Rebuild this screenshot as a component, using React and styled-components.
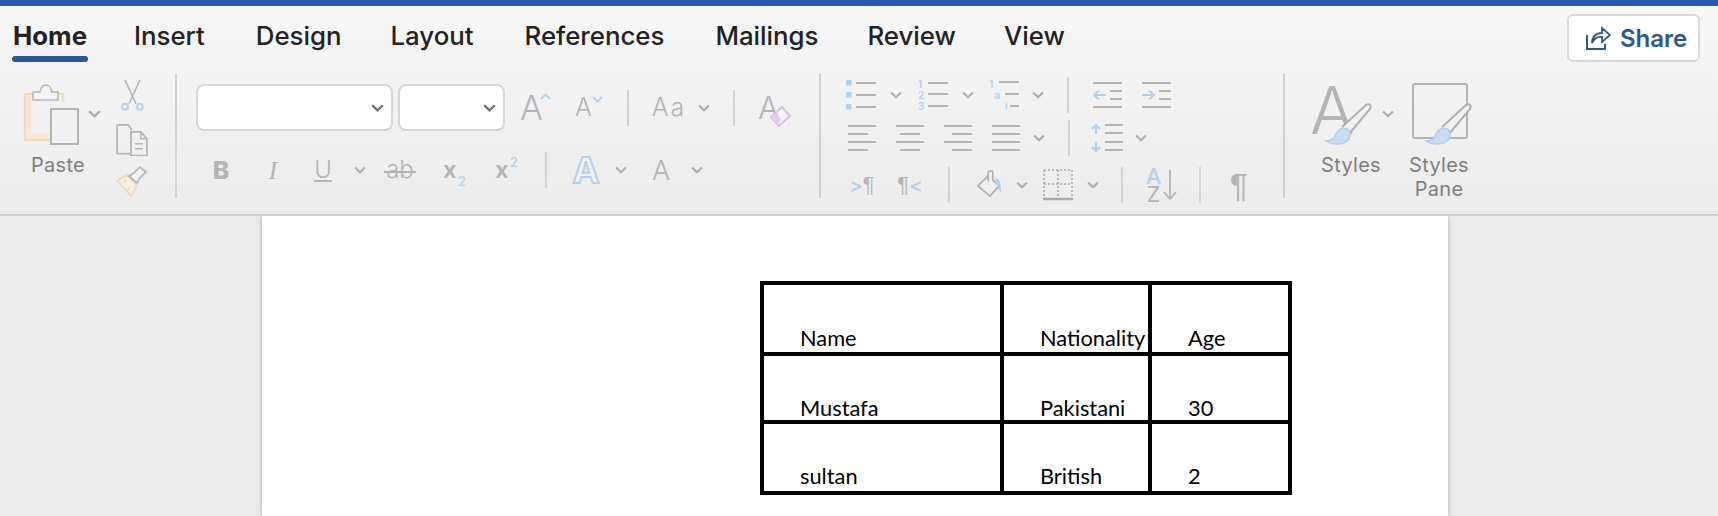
import React from 'react';
import styled, { createGlobalStyle } from 'styled-components';

const GRAY = '#b4b4b4';
const BLUE = '#b5d1ea';
const ORANGE = '#f3d9bb';

const GlobalStyle = createGlobalStyle`
  html, body {
    margin: 0;
    height: 516px;
    overflow: hidden;
    background: #ececec;
    font-family: Inter, "Liberation Sans", sans-serif;
  }
`;

const Accent = styled.div`
  height: 6px;
  background: #2b58b7;
`;

const Ribbon = styled.div`
  height: 210px;
  box-sizing: border-box;
  border-bottom: 2px solid #cfcfcf;
  background: linear-gradient(#f7f7f7, #ececec);
`;

const TabBar = styled.div`
  height: 68px;
  display: flex;
  align-items: flex-start;
  padding-left: 13px;
  position: relative;
`;

const Tab = styled.div`
  margin-left: ${p => p.$l || 0}px;
  margin-top: 14px;
  padding-bottom: 6px;
  font-size: 25.8px;
  line-height: 31px;
  font-weight: ${p => (p.$active ? 700 : 500)};
  color: #222;
  position: relative;
  ${p => p.$active && `
    &::after {
      content: '';
      position: absolute;
      left: -1px;
      right: -1px;
      top: 36px;
      height: 6px;
      border-radius: 3px;
      background: #2b579a;
    }
  `}
`;

const ShareButton = styled.div`
  position: absolute;
  left: 1567px;
  top: 8px;
  width: 133px;
  height: 48px;
  box-sizing: border-box;
  border: 2px solid #d8d8d8;
  border-radius: 6px;
  background: #fff;
  display: flex;
  align-items: center;
  padding-left: 16px;
  gap: 9px;
  color: #2b579a;
  font-size: 24px;
  font-weight: 600;
`;

const Tools = styled.div`
  display: flex;
  height: 124px;
`;

const Divider = styled.div`
  width: 2px;
  height: 124px;
  background: #d0d0d0;
  flex: none;
`;

const PasteGroup = styled.div`
  width: 175px;
  display: flex;
  flex: none;
`;

const PasteButton = styled.div`
  width: 100px;
  margin-left: 8px;
  padding-top: 9px;
  display: flex;
  flex-direction: column;
  align-items: center;
`;

const IconRow = styled.div`
  height: 62px;
  width: 100%;
  display: flex;
  align-items: center;
  padding-left: ${p => p.$pad || 0}px;
  box-sizing: border-box;
`;

const ClipColumn = styled.div`
  width: 32px;
  margin-left: 8px;
  padding-top: 5px;
  display: flex;
  flex-direction: column;
  gap: 10px;
`;

const Label = styled.div`
  font-size: 20px;
  letter-spacing: 0.3px;
  line-height: 24px;
  text-align: center;
  color: #808080;
  margin-top: 8px;
`;

const FontGroup = styled.div`
  width: 642px;
  flex: none;
  padding: 10px 0 0 19px;
  box-sizing: border-box;
`;

const ParaGroup = styled.div`
  width: 462px;
  flex: none;
`;

const StylesGroup = styled.div`
  display: flex;
  padding-left: 27px;
`;

const StyleButton = styled.div`
  width: ${p => p.$w}px;
  margin-left: ${p => p.$l || 0}px;
  padding-top: 9px;
  display: flex;
  flex-direction: column;
  align-items: center;
  flex: none;
`;

const Row = styled.div`
  display: flex;
  align-items: center;
  height: ${p => p.$h}px;
  margin-top: ${p => p.$t || 0}px;
`;

const Slot = styled.div`
  width: ${p => p.$w}px;
  margin-left: ${p => p.$l || 0}px;
  flex: none;
  display: flex;
  justify-content: ${p => (p.$start ? 'flex-start' : 'center')};
  align-items: center;
  position: relative;
`;

const MiniSep = styled.div`
  width: 2px;
  height: ${p => p.$h || 36}px;
  margin-left: ${p => p.$l || 0}px;
  background: #d2d2d2;
  flex: none;
`;

const SelectBox = styled.div`
  width: ${p => p.$w}px;
  height: 47px;
  margin-left: ${p => p.$l || 0}px;
  box-sizing: border-box;
  flex: none;
  background: #fff;
  border: 2px solid #d6d6d6;
  border-radius: 8px;
  display: flex;
  align-items: center;
  justify-content: flex-end;
  padding-right: 7px;
`;

const Glyph = styled.span`
  font-family: ${p => p.$family || 'Inter, "Liberation Sans", sans-serif'};
  font-size: ${p => p.$size}px;
  font-weight: ${p => p.$weight || 300};
  font-style: ${p => (p.$italic ? 'italic' : 'normal')};
  letter-spacing: ${p => p.$track || 0}px;
  line-height: 1;
  color: ${p => p.$color || GRAY};
  text-decoration: ${p => p.$deco || 'none'};
`;

const Script = styled.span`
  position: absolute;
  left: ${p => p.$x}px;
  top: ${p => p.$y}px;
  font-size: 13px;
  font-weight: 500;
  line-height: 1;
  color: ${BLUE};
`;

const Overlay = styled.svg`
  position: absolute;
  left: ${p => p.$x}px;
  top: ${p => p.$y}px;
`;

const OutlineA = styled.span`
  font-size: 36px;
  font-weight: 700;
  line-height: 1;
  color: #f2f2f2;
  -webkit-text-stroke: 2px ${BLUE};
`;

const StrikeLine = styled.span`
  position: absolute;
  left: 0;
  right: 0;
  top: 13px;
  height: 2px;
  background: ${GRAY};
`;

const LetterStack = styled.div`
  width: 19px;
  height: 34px;
  display: flex;
  flex-direction: column;
  align-items: center;
  justify-content: space-between;
  & > span {
    display: block;
    height: 16px;
    line-height: 16px;
  }
`;

const BigA = styled.span`
  position: absolute;
  left: -2px;
  top: -6px;
  font-size: 66px;
  font-weight: 350;
  line-height: 1;
  color: ${GRAY};
`;

const IconBox = styled.div`
  position: relative;
  width: 60px;
  height: 62px;
  flex: none;
`;

const PaneFrame = styled.div`
  width: 56px;
  height: 56px;
  box-sizing: border-box;
  border: 2px solid ${GRAY};
  border-radius: 3px;
`;

const Workspace = styled.div`
  height: 300px;
  padding-left: 262px;
  overflow: hidden;
`;

const Page = styled.div`
  width: 1186px;
  height: 300px;
  background: #fff;
  box-shadow: 0 0 5px rgba(0, 0, 0, 0.28);
  padding: 65px 0 0 498px;
  box-sizing: border-box;
`;

const Table = styled.table`
  border-collapse: collapse;
  border: 4px solid #000;
  table-layout: fixed;
  width: 528px;
  font-family: Lato, Carlito, sans-serif;
  font-size: 21.8px;
  color: #000;
`;

const Cell = styled.td`
  border: 4px solid #000;
  height: ${p => p.$h}px;
  box-sizing: border-box;
  width: ${p => p.$w}px;
  padding: 0 0 ${p => p.$pb || 0}px 36px;
  vertical-align: bottom;
  line-height: 24px;
  white-space: nowrap;
`;

const Chevron = ({ dark }) => (
  <svg width="13" height="8" viewBox="0 0 13 8" fill="none">
    <path d="M1.2 1.2 6.5 6.4 11.8 1.2" stroke={dark ? '#707070' : '#adadad'} strokeWidth="2.3" />
  </svg>
);

const ShareIcon = () => (
  <svg width="26" height="26" viewBox="0 0 26 26" fill="none" stroke="#2b579a" strokeWidth="2">
    <path d="M2 10v14h18v-5" />
    <path d="M7 18c0-6 4-10 10-10V3l8 7-8 7v-5c-5-1-8 2-10 6z" strokeWidth="1.8" />
  </svg>
);

const PasteIcon = () => (
  <svg width="60" height="62" viewBox="0 0 60 62" fill="none">
    <path d="M3 11h38v8M3 11v46h26" stroke={ORANGE} strokeWidth="2.5" />
    <path d="M5 13h4v38h20v5H5z" fill="#f8e6d0" />
    <path d="M11 17V9h7c1-5 3-7 6-7s5 2 6 7h6v8z" stroke="#b8b8b8" strokeWidth="1.6" fill="#f4f4f4" />
    <rect x="29" y="26" width="27" height="35" stroke="#b4b4b4" strokeWidth="2" fill="#f1f1f1" />
  </svg>
);

const CutIcon = () => (
  <svg width="32" height="34" viewBox="0 0 32 34" fill="none">
    <path d="M9 1 20 25M24 1 13 25" stroke="#b4b4b4" strokeWidth="1.5" />
    <circle cx="9" cy="28" r="3" stroke={BLUE} strokeWidth="2" />
    <circle cx="24" cy="28" r="3" stroke={BLUE} strokeWidth="2" />
  </svg>
);

const CopyIcon = () => (
  <svg width="32" height="34" viewBox="0 0 32 34" fill="none" stroke="#b4b4b4" strokeWidth="1.8">
    <path d="M14 31H1V2h11l4 5" />
    <path d="M15 9h10l6 7v17H15z" fill="#f1f1f1" />
    <path d="M25 9v7h6M19 21h8M19 26h8" strokeWidth="1.5" />
  </svg>
);

const PainterIcon = () => (
  <svg width="32" height="32" viewBox="0 0 32 32" fill="none">
    <path d="M1 15 11 9 21 20 15 30z" stroke={ORANGE} strokeWidth="2" fill="#f7efe5" />
    <path d="M7 17 10 14M11 25 14 21" stroke={ORANGE} strokeWidth="1.5" />
    <path d="M13 10 18 7l6-6 6 5-6 6-3 5z" stroke="#b8b8b8" strokeWidth="1.8" fill="#f2f2f2" />
  </svg>
);

const ListLines = ({ ys, x1, x2 }) =>
  ys.map(y => <line key={y} x1={x1} x2={x2} y1={y} y2={y} stroke={GRAY} strokeWidth="2" />);

const Bullets = () => (
  <svg width="30" height="30" viewBox="0 0 30 30">
    {[0, 12, 24].map(y => <rect key={y} x="0" y={y} width="5.5" height="5.5" fill={BLUE} />)}
    <ListLines ys={[3, 15, 27]} x1={10} x2={30} />
  </svg>
);

const NumberText = ({ x, y, children, size = 10 }) => (
  <text x={x} y={y} fontSize={size} fontWeight="600" fontFamily="Inter, sans-serif" fill={BLUE}>{children}</text>
);

const Numbering = () => (
  <svg width="30" height="32" viewBox="0 0 30 32">
    <NumberText x={0} y={9}>1</NumberText>
    <NumberText x={0} y={20}>2</NumberText>
    <NumberText x={0} y={31}>3</NumberText>
    <ListLines ys={[4, 15, 27]} x1={10} x2={30} />
  </svg>
);

const MultiLevel = () => (
  <svg width="30" height="32" viewBox="0 0 30 32">
    <NumberText x={0} y={9}>1</NumberText>
    <NumberText x={5} y={20} size={11}>a</NumberText>
    <NumberText x={16} y={31}>i</NumberText>
    <line x1="10" x2="30" y1="3" y2="3" stroke={GRAY} strokeWidth="2" />
    <line x1="16" x2="30" y1="15" y2="15" stroke={GRAY} strokeWidth="2" />
    <line x1="21" x2="30" y1="27" y2="27" stroke={GRAY} strokeWidth="2" />
  </svg>
);

const Indent = ({ out }) => (
  <svg width="29" height="28" viewBox="0 0 29 28" fill="none">
    <ListLines ys={[2, 26]} x1={0} x2={29} />
    <ListLines ys={[10, 18]} x1={17} x2={29} />
    <path
      d={out ? 'M13 14H1M6 9.5 1 14l5 4.5' : 'M0 14h12M7 9.5l5 4.5-5 4.5'}
      stroke={BLUE}
      strokeWidth="2.2"
    />
  </svg>
);

const Align = ({ rows }) => (
  <svg width="28" height="28" viewBox="0 0 28 28">
    {rows.map(([x1, x2], i) => (
      <line key={i} x1={x1} x2={x2} y1={2 + i * 8} y2={2 + i * 8} stroke={GRAY} strokeWidth="2" />
    ))}
  </svg>
);

const LineSpacing = () => (
  <svg width="32" height="30" viewBox="0 0 32 30" fill="none">
    <ListLines ys={[2, 10, 19, 27]} x1={14} x2={32} />
    <path d="M5 2v9M1 6l4-4 4 4M5 19v9M1 24l4 4 4-4" stroke={BLUE} strokeWidth="2.2" />
  </svg>
);

const Shading = () => (
  <svg width="28" height="32" viewBox="0 0 28 32" fill="none">
    <path d="M1 17 12 6l12 11-10 11z" stroke="#b0b0b0" strokeWidth="1.8" />
    <path d="M12 12V3c0-3 5-3 5 0v9" stroke="#b0b0b0" strokeWidth="1.8" fill="#f1f1f1" />
    <path d="M20 9c4 0 6 4 6 16-2-2-3-6-6-10z" fill={BLUE} />
  </svg>
);

const Borders = () => (
  <svg width="30" height="32" viewBox="0 0 30 32" fill="none">
    <path d="M1 1h28M1 1v28M29 1v28M15 1v28M1 15h28" stroke="#a8a8a8" strokeWidth="1.6" strokeDasharray="2 2" />
    <line x1="0" x2="30" y1="30" y2="30" stroke="#a8a8a8" strokeWidth="2.4" />
  </svg>
);

const DownArrow = () => (
  <svg width="14" height="32" viewBox="0 0 14 32" fill="none">
    <path d="M7 1v29M1 23l6 7 6-7" stroke={GRAY} strokeWidth="1.8" />
  </svg>
);

const BrushOver = () => (
  <Overlay $x={0} $y={0} width="66" height="66" viewBox="0 0 66 66" fill="none">
    <path d="M30 44 54 22c3-2 6 0 4 4L37 51" stroke="#b0b0b0" strokeWidth="2" fill="#f1f1f1" />
    <path
      d="M14 58c6 0 8-2 10-7 2-5 7-7 11-5 4 2 4 9 0 12-5 4-15 4-21 0z"
      fill="#c9dcef"
      stroke="#b3cde6"
      strokeWidth="1.5"
    />
  </Overlay>
);

const GrowMark = ({ up, x, y }) => (
  <Overlay $x={x} $y={y} width="11" height="7" viewBox="0 0 11 7" fill="none">
    <path d={up ? 'M1 6l4.5-4.5L10 6' : 'M1 1l4.5 4.5L10 1'} stroke={BLUE} strokeWidth="2" />
  </Overlay>
);

const EraserMark = () => (
  <Overlay $x={12} $y={13} width="22" height="22" viewBox="0 0 22 22" fill="none">
    <path d="M1 12 12 2l8 9-11 10z" stroke="#d9bfe0" strokeWidth="2" fill="#f2f2f2" />
    <path d="M1 12 7 7l4 8-4 4z" fill="#e3cdea" />
  </Overlay>
);

const A = ({ size, weight }) => <Glyph $size={size} $weight={weight}>A</Glyph>;

export default function App() {
  return (
    <>
      <GlobalStyle />
      <Accent />
      <Ribbon>
        <TabBar>
          <Tab $active>Home</Tab>
          <Tab $l={47}>Insert</Tab>
          <Tab $l={51}>Design</Tab>
          <Tab $l={49}>Layout</Tab>
          <Tab $l={51}>References</Tab>
          <Tab $l={51}>Mailings</Tab>
          <Tab $l={49}>Review</Tab>
          <Tab $l={48}>View</Tab>
          <ShareButton><ShareIcon />Share</ShareButton>
        </TabBar>
        <Tools>
          <PasteGroup>
            <PasteButton>
              <IconRow $pad={14}>
                <PasteIcon />
                <Slot $l={6} $w={13}><Chevron /></Slot>
              </IconRow>
              <Label>Paste</Label>
            </PasteButton>
            <ClipColumn>
              <CutIcon />
              <CopyIcon />
              <PainterIcon />
            </ClipColumn>
          </PasteGroup>
          <Divider />
          <FontGroup>
            <Row $h={47}>
              <SelectBox $w={197}><Chevron dark /></SelectBox>
              <SelectBox $w={107} $l={5}><Chevron dark /></SelectBox>
              <Slot $l={15} $w={30} $start>
                <A size={34} />
                <GrowMark up x={20} y={2} />
              </Slot>
              <Slot $l={25} $w={27} $start>
                <A size={25} />
                <GrowMark x={17} y={1} />
              </Slot>
              <MiniSep $l={25} />
              <Slot $l={24} $w={32}><Glyph $size={25} $track={2}>Aa</Glyph></Slot>
              <Slot $l={13} $w={12}><Chevron /></Slot>
              <MiniSep $l={23} />
              <Slot $l={23} $w={32} $start>
                <A size={31} />
                <EraserMark />
              </Slot>
            </Row>
            <Row $h={46} $t={16}>
              <Slot $l={17} $w={16}><Glyph $size={25} $weight={800}>B</Glyph></Slot>
              <Slot $l={36} $w={16}><Glyph $size={25} $italic $family='"Liberation Serif", serif' $weight={400}>I</Glyph></Slot>
              <Slot $l={33} $w={18}><Glyph $size={24} $deco="underline">U</Glyph></Slot>
              <Slot $l={22} $w={12}><Chevron /></Slot>
              <Slot $l={18} $w={32}><Glyph $size={24}>ab</Glyph><StrikeLine /></Slot>
              <Slot $l={27} $w={22} $start>
                <Glyph $size={24} $weight={600}>x</Glyph>
                <Script $x={15} $y={17}>2</Script>
              </Slot>
              <Slot $l={30} $w={22} $start>
                <Glyph $size={24} $weight={600}>x</Glyph>
                <Script $x={15} $y={-2}>2</Script>
              </Slot>
              <MiniSep $l={28} />
              <Slot $l={23} $w={32}><OutlineA>A</OutlineA></Slot>
              <Slot $l={13} $w={12}><Chevron /></Slot>
              <Slot $l={25} $w={18}><A size={27} /></Slot>
              <Slot $l={21} $w={12}><Chevron /></Slot>
            </Row>
          </FontGroup>
          <Divider />
          <ParaGroup>
            <Row $h={40} $t={1}>
              <Slot $l={25} $w={30}><Bullets /></Slot>
              <Slot $l={14} $w={12}><Chevron /></Slot>
              <Slot $l={16} $w={30}><Numbering /></Slot>
              <Slot $l={14} $w={12}><Chevron /></Slot>
              <Slot $l={15} $w={30}><MultiLevel /></Slot>
              <Slot $l={13} $w={12}><Chevron /></Slot>
              <MiniSep $l={23} />
              <Slot $l={24} $w={29}><Indent out /></Slot>
              <Slot $l={20} $w={29}><Indent /></Slot>
            </Row>
            <Row $h={40} $t={3}>
              <Slot $l={27} $w={28}><Align rows={[[0, 28], [0, 20], [0, 28], [0, 20]]} /></Slot>
              <Slot $l={20} $w={28}><Align rows={[[0, 28], [4, 24], [0, 28], [4, 24]]} /></Slot>
              <Slot $l={20} $w={28}><Align rows={[[0, 28], [8, 28], [0, 28], [8, 28]]} /></Slot>
              <Slot $l={20} $w={28}><Align rows={[[0, 28], [0, 28], [0, 28], [0, 28]]} /></Slot>
              <Slot $l={13} $w={12}><Chevron /></Slot>
              <MiniSep $l={23} />
              <Slot $l={21} $w={32}><LineSpacing /></Slot>
              <Slot $l={12} $w={12}><Chevron /></Slot>
            </Row>
            <Row $h={40} $t={7}>
              <Slot $l={29} $w={24}>
                <Glyph $size={20} $color={BLUE} $weight={600}>&gt;</Glyph>
                <Glyph $size={22} $weight={400} $family='"Liberation Sans", sans-serif'>¶</Glyph>
              </Slot>
              <Slot $l={24} $w={24}>
                <Glyph $size={22} $weight={400} $family='"Liberation Sans", sans-serif'>¶</Glyph>
                <Glyph $size={20} $color={BLUE} $weight={600}>&lt;</Glyph>
              </Slot>
              <MiniSep $l={26} />
              <Slot $l={27} $w={26}><Shading /></Slot>
              <Slot $l={13} $w={12}><Chevron /></Slot>
              <Slot $l={15} $w={30}><Borders /></Slot>
              <Slot $l={14} $w={12}><Chevron /></Slot>
              <MiniSep $l={22} />
              <Slot $l={21} $w={33} $start>
                <LetterStack>
                  <Glyph $size={22} $weight={500} $color={BLUE}>A</Glyph>
                  <Glyph $size={22} $weight={400}>Z</Glyph>
                </LetterStack>
                <DownArrow />
              </Slot>
              <MiniSep $l={22} />
              <Slot $l={28} $w={20}><Glyph $size={34} $weight={400} $family='"Liberation Sans", sans-serif'>¶</Glyph></Slot>
            </Row>
          </ParaGroup>
          <Divider />
          <StylesGroup>
            <StyleButton $w={78}>
              <IconRow>
                <IconBox><BigA>A</BigA><BrushOver /></IconBox>
                <Slot $l={10} $w={12}><Chevron /></Slot>
              </IconRow>
              <Label>Styles</Label>
            </StyleButton>
            <StyleButton $w={68} $l={15}>
              <IconRow $pad={7}>
                <IconBox><PaneFrame /><BrushOver /></IconBox>
              </IconRow>
              <Label>Styles<br />Pane</Label>
            </StyleButton>
          </StylesGroup>
        </Tools>
      </Ribbon>
      <Workspace>
        <Page>
          <Table>
            <tbody>
              <tr>
                <Cell $w={240} $h={71} $pb={2}>Name</Cell>
                <Cell $w={148} $h={71} $pb={2}>Nationality</Cell>
                <Cell $w={140} $h={71} $pb={2}>Age</Cell>
              </tr>
              <tr>
                <Cell $h={68}>Mustafa</Cell>
                <Cell $h={68}>Pakistani</Cell>
                <Cell $h={68}>30</Cell>
              </tr>
              <tr>
                <Cell $h={71} $pb={3}>sultan</Cell>
                <Cell $h={71} $pb={3}>British</Cell>
                <Cell $h={71} $pb={3}>2</Cell>
              </tr>
            </tbody>
          </Table>
        </Page>
      </Workspace>
    </>
  );
}
